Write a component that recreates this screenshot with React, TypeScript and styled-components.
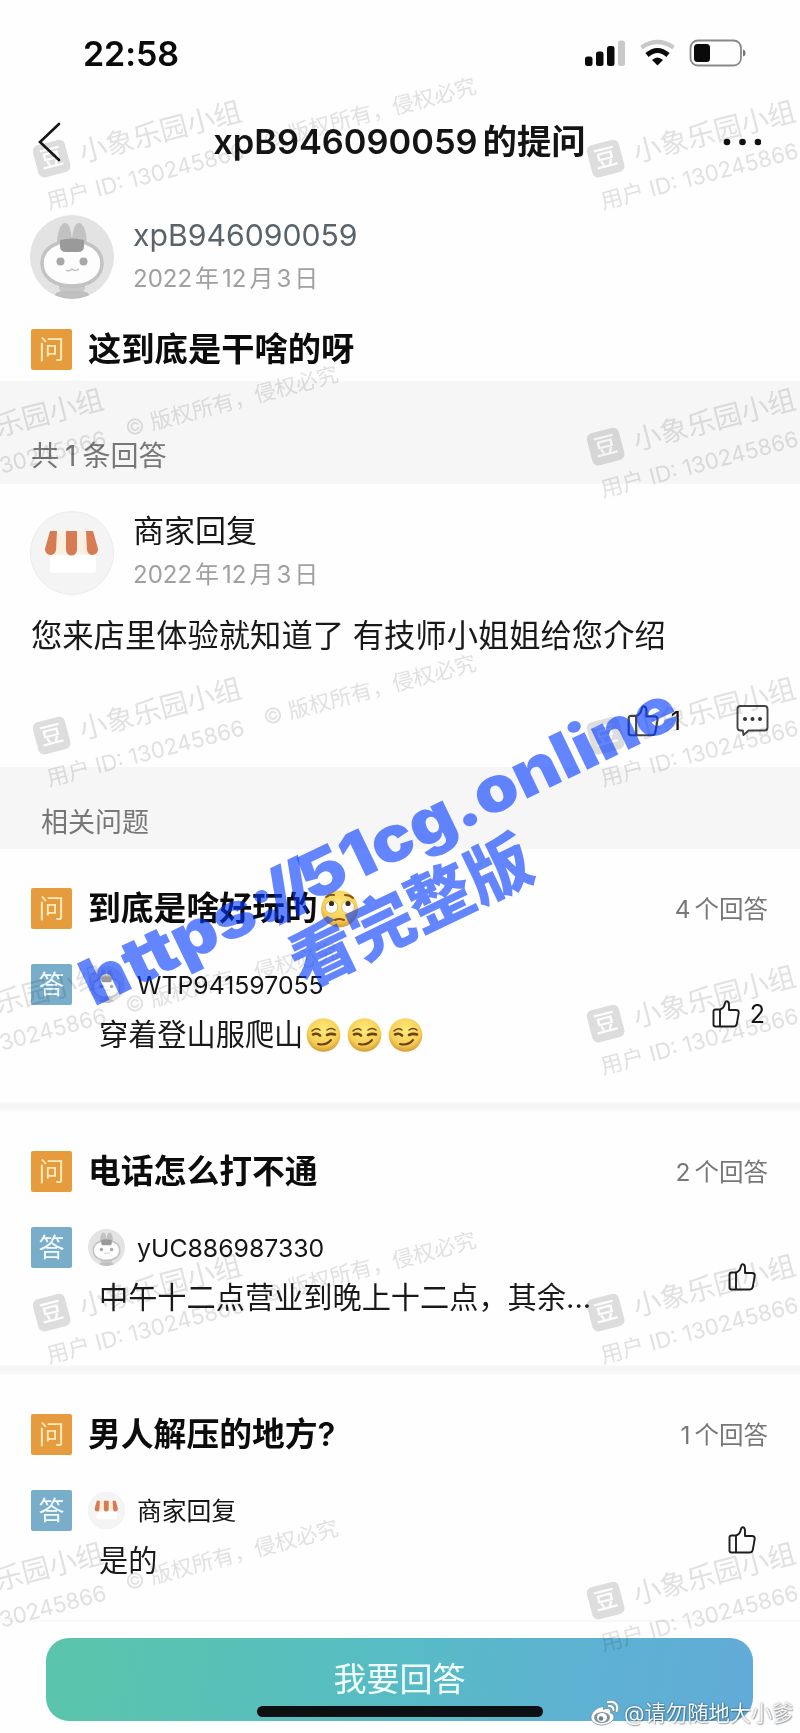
import React from 'react';
import styled, { createGlobalStyle } from 'styled-components';

const latin = `Inter, "Noto Sans CJK SC", sans-serif`;

const GlobalStyle = createGlobalStyle`
  *, *::before, *::after { box-sizing: border-box; }
  body { margin: 0; background: #fefefe; font-family: ${latin}; color: #151515; }
`;

const Page = styled.div`
  position: relative;
  width: 800px;
  height: 1733px;
  overflow: hidden;
  display: flex;
  flex-direction: column;
  background: #fefefe;
`;

const StatusBar = styled.header`
  height: 96px;
  flex: none;
  padding: 12px 54px 0 83px;
  display: flex;
  align-items: center;
  justify-content: space-between;
`;

const Clock = styled.div`
  font-size: 34px;
  line-height: 40px;
  font-weight: 600;
  letter-spacing: -0.1px;
  color: #0a0a0a;
`;

const NavBar = styled.nav`
  height: 92px;
  flex: none;
  padding: 0 39px 0 36px;
  display: flex;
  align-items: center;
  justify-content: space-between;
`;

const NavTitle = styled.h1`
  margin: 0 0 0 14px;
  font-size: 34.4px;
  line-height: 44px;
  font-weight: 600;
  color: #141414;
  white-space: nowrap;
`;

const Num = styled.span<{ $l?: number; $r?: number }>`
  margin-left: ${p => p.$l ?? 0}px;
  margin-right: ${p => p.$r ?? 0}px;
`;

const Author = styled.div`
  display: flex;
  align-items: center;
  gap: 19px;
  height: 84px;
`;

const AuthorText = styled.div`
  display: flex;
  flex-direction: column;
  gap: 6px;
`;

const AuthorName = styled.div<{ $dark?: boolean }>`
  font-size: ${p => (p.$dark ? 31 : 30.2)}px;
  line-height: 38px;
  color: ${p => (p.$dark ? '#161616' : '#59636c')};
`;

const DateText = styled.div`
  font-size: 24px;
  line-height: 38px;
  color: #a0a0a0;
`;

const Asked = styled.section`
  height: 193px;
  flex: none;
  padding: 27px 30px 0;
  display: flex;
  flex-direction: column;
  gap: 30px;
`;

const Line = styled.div`
  display: flex;
  align-items: center;
  height: 41px;
`;

const Badge = styled.span<{ $kind: 'ask' | 'answer' }>`
  width: 41px;
  height: 41px;
  margin-left: 1px;
  flex: none;
  display: grid;
  place-items: center;
  border-radius: 2px;
  font-size: 26px;
  line-height: 41px;
  background: ${p => (p.$kind === 'ask' ? '#e69c3c' : '#79aecb')};
  color: ${p => (p.$kind === 'ask' ? '#fdebbd' : '#f3fbff')};
`;

const Question = styled.h2<{ $size?: number }>`
  margin: 0 0 0 16px;
  display: flex;
  align-items: center;
  font-size: ${p => p.$size ?? 32.8}px;
  line-height: 41px;
  font-weight: 600;
  color: #0c0c0c;
  white-space: nowrap;
`;

const Band = styled.div<{ $h: number; $pad: string; $size: number }>`
  height: ${p => p.$h}px;
  flex: none;
  padding: ${p => p.$pad};
  background: #f6f6f6;
  font-size: ${p => p.$size}px;
  line-height: 36px;
  color: #777;
`;

const Reply = styled.section`
  height: 283px;
  flex: none;
  padding: 27px 30px 0;
  display: flex;
  flex-direction: column;
`;

const ReplyBody = styled.p`
  margin: 20px 0 0 1px;
  font-size: 31.3px;
  line-height: 42px;
  color: #191919;
  white-space: nowrap;
`;

const ReplyActions = styled.div`
  margin-top: 47px;
  padding-right: 1px;
  display: flex;
  align-items: center;
  justify-content: flex-end;
  height: 34px;
`;

const Count = styled.span<{ $l: number; $r?: number }>`
  margin-left: ${p => p.$l}px;
  margin-right: ${p => p.$r ?? 0}px;
  font-size: 25px;
  line-height: 30px;
`;

const Card = styled.article`
  height: 253px;
  flex: none;
  padding: 39px 32px 0 30px;
  display: flex;
  flex-direction: column;
`;

const Divider = styled.div`
  height: 10px;
  flex: none;
  background: linear-gradient(#fafafa, #f4f4f4 40%, #fbfbfb);
`;

const Answers = styled.span`
  margin-left: auto;
  font-size: 24.5px;
  line-height: 40px;
  color: #777;
`;

const AnswerArea = styled.div`
  margin-top: 35px;
  display: flex;
`;

const AnswerMain = styled.div`
  margin-left: 16px;
  flex: 1;
`;

const Who = styled.div<{ $cjk?: boolean }>`
  display: flex;
  align-items: center;
  gap: 12px;
  height: 41px;
  font-size: 24.8px;

  span {
    padding-bottom: ${p => (p.$cjk ? 4 : 0)}px;
  }
`;

const AnswerText = styled.div`
  margin: 8px 0 0 11px;
  display: flex;
  align-items: center;
  font-size: 29.2px;
  line-height: 44px;
  color: #191919;
  white-space: nowrap;
`;

const Likes = styled.div<{ $right: number }>`
  height: 34px;
  margin: 33px ${p => p.$right}px 0 0;
  display: flex;
  align-items: center;
`;

const Footer = styled.footer`
  margin-top: -8px;
  flex: 1;
  padding: 16px 47px 0 46px;
  border-top: 2px solid #f8f8f8;
`;

const AnswerButton = styled.button`
  width: 100%;
  height: 83px;
  border: 0;
  border-radius: 23px;
  padding: 0;
  display: flex;
  flex-direction: column;
  align-items: center;
  background: linear-gradient(100deg, #5bc4ac 5%, #57bcc4 48%, #5eb2d2 75%, #61abd8);
  color: #f2ffff;
  font: 400 33px ${latin};
`;

const ButtonText = styled.span`
  margin-top: 20px;
  line-height: 42px;
`;

const HomeBar = styled.i`
  width: 286px;
  height: 11px;
  margin-top: 6px;
  border-radius: 6px;
  background: #0d1012;
`;

const Overlay = styled.div`
  position: absolute;
  inset: 0;
  overflow: hidden;
  pointer-events: none;
  mix-blend-mode: multiply;
`;

const Stamp = styled.div<{ $x: number; $y: number }>`
  position: absolute;
  left: ${p => p.$x}px;
  top: ${p => p.$y}px;
  display: grid;
  grid-template-columns: 213px max-content;
  column-gap: 13px;
  transform: translate(-17px, -17px) rotate(-14.7deg);
  transform-origin: 17px 17px;
  color: #e2e2e2;
  white-space: nowrap;
`;

const StampHead = styled.div`
  display: flex;
  align-items: center;
  height: 34px;
  gap: 12px;
  font-size: 27.8px;
`;

const StampLogo = styled.span`
  width: 33px;
  height: 33px;
  border-radius: 6px;
  background: #dedede;
  color: #fff;
  display: grid;
  place-items: center;
  font-size: 23px;
  font-weight: 500;
  line-height: 33px;
`;

const StampId = styled.div`
  grid-column: 1;
  margin: 9px 0 0 1px;
  font-size: 22.1px;
  line-height: 30px;
`;

const StampRights = styled.div`
  grid-column: 2;
  margin: 5px 0 0 0;
  font-size: 21.5px;
  line-height: 30px;
`;

const Link = styled.div`
  position: absolute;
  left: 94px;
  top: 944px;
  font-size: 64px;
  line-height: 80px;
  font-weight: 900;
  color: rgba(0, 55, 255, 0.61);
  white-space: nowrap;
  transform: rotate(-25.7deg) scaleX(1.1);
  transform-origin: 0 63px;
`;

const Tight = styled.span`
  letter-spacing: -9px;
`;

const LinkNote = styled.div`
  position: absolute;
  left: 411px;
  top: 912px;
  font-size: 65px;
  line-height: 80px;
  font-weight: 900;
  color: rgba(0, 55, 255, 0.61);
  white-space: nowrap;
  transform: translate(-50%, -50%) rotate(-25.7deg);
`;

const Credit = styled.div`
  position: absolute;
  left: 590px;
  top: 1697px;
  height: 32px;
  display: flex;
  align-items: center;
  gap: 5px;
  font-size: 21.3px;
  line-height: 32px;
  color: #f4f8fa;
  text-shadow: 0 0 2px rgba(0, 0, 0, 0.5), 1px 1px 1px rgba(0, 0, 0, 0.25);
  white-space: nowrap;
`;

const Rabbit = ({ size }: { size: number }) => (
  <svg width={size} height={size} viewBox="0 0 84 84">
    <defs><clipPath id="disc"><circle cx="42" cy="42" r="42" /></clipPath></defs>
    <g clipPath="url(#disc)">
      <rect width="84" height="84" fill="#e3e3e3" />
      <ellipse cx="42" cy="80" rx="17" ry="5" fill="#c0c0c0" />
      <rect x="29" y="68" width="26" height="8" rx="3" fill="#c8c8c8" />
      <path d="M27 30C27 19 30 8 35 8S41 17 42 24C43 17 44 8 49 8s8 11 8 22z" fill="#c2c2c2" />
      <path d="M42 26c18 0 30 9 30 22 0 14-12 23-30 23S12 62 12 48c0-13 12-22 30-22z" fill="#fdfdfd" stroke="#c2c2c2" strokeWidth="3.500" />
      <path d="M30 25q12-3 24 0v6q0 6-6 6H36q-6 0-6-6z" fill="#9a9a9a" />
      <circle cx="30.500" cy="46.500" r="4" fill="#a8a8a8" />
      <circle cx="53.500" cy="46.500" r="4" fill="#a8a8a8" />
      <path d="M36 55q3 2 6-1q3 3 7 0" fill="none" stroke="#c0c0c0" strokeWidth="1.500" />
    </g>
  </svg>
);

const Shop = ({ size }: { size: number }) => (
  <svg width={size} height={size} viewBox="0 0 84 84">
    <circle cx="42" cy="42" r="41.500" fill="#f4f4f4" stroke="#ebebeb" />
    <path d="M20 44h46v15q0 3-3 3H23q-3 0-3-3z" fill="#fff" />
    <path d="M27 20h9v20q-5 6-11 1zM48 20h8l4 21q-6 5-12-1z" fill="#fbf0df" />
    <path d="M20 20h7l-1 19a5.500 5.500 0 0 1-11-1z" fill="#d97b52" />
    <path d="M36 20h11v19a5.500 5.500 0 0 1-11 0z" fill="#d97b52" />
    <path d="M56 20h7l5 18a5.500 5.500 0 0 1-11 1z" fill="#d97b52" />
  </svg>
);

const Thumb = ({ size = 28, color = '#1d1d1d' }: { size?: number; color?: string }) => (
  <svg width={size} height={size} viewBox="0 0 28 28" fill="none" stroke={color} strokeWidth="1.900" strokeLinejoin="round">
    <path d="M8 9.500H3.500Q1.500 9.500 1.500 11.500V24.500Q1.500 26.500 3.500 26.500H21.500Q24 26.500 24.700 24.300L26.700 13Q27 10 24 10H17V4.500Q16.800 1.200 14.500 1.200Q13.400 1.200 13 3Q12 8.500 8 9.500Z" />
    <path d="M8 9.500V26.500" />
  </svg>
);

const Comment = () => (
  <svg width="33" height="34" viewBox="0 0 33 34">
    <path d="M4.500 2H28.500Q31.500 2 31.500 5V23.500Q31.500 26.500 28.500 26.500H12.500L7.500 31L6.800 26.500H4.500Q1.500 26.500 1.500 23.500V5Q1.500 2 4.500 2Z" fill="none" stroke="#444" strokeWidth="1.900" strokeLinejoin="round" />
    <g fill="#333"><circle cx="9" cy="15" r="2" /><circle cx="16.500" cy="15" r="2" /><circle cx="24" cy="15" r="2" /></g>
  </svg>
);

const FaceFill = () => (
  <defs>
    <radialGradient id="face" cx="50%" cy="35%" r="65%">
      <stop offset="0" stopColor="#fdea7c" /><stop offset=".7" stopColor="#f6cf55" /><stop offset="1" stopColor="#d99a34" />
    </radialGradient>
  </defs>
);

const Smirk = () => (
  <svg width="41" height="34" viewBox="0 0 41 34">
    <FaceFill />
    <circle cx="20.500" cy="17" r="16.800" fill="url(#face)" />
    <g fill="none" stroke="#6a4214" strokeWidth="2" strokeLinecap="round">
      <path d="M9 13q4-4 8-1M24 12q4-3 8 0" strokeWidth="1.400" />
      <path d="M10 16.500q4-2 7 1M24 17q4-2 8-.5" strokeWidth="2.600" />
      <path d="M15 26q8 2 13-4" />
    </g>
  </svg>
);

const EyeRoll = () => (
  <svg width="42" height="38" viewBox="1 0 42 38">
    <FaceFill />
    <circle cx="22.500" cy="19" r="18.500" fill="url(#face)" />
    <g fill="#fff" stroke="#c79a4a" strokeWidth=".6"><circle cx="14.500" cy="17" r="6.300" /><circle cx="31" cy="17" r="6.300" /></g>
    <circle cx="14.500" cy="13.500" r="2.600" fill="#3d2a18" /><circle cx="31" cy="13.500" r="2.600" fill="#3d2a18" />
    <path d="M9 7q4-3 8-2M28 5q5 0 8 3M18 30q4-2 9 0" fill="none" stroke="#8a5418" strokeWidth="2" strokeLinecap="round" />
  </svg>
);

const StatusIcons = () => (
  <svg width="162" height="30" viewBox="0 0 162 30">
    <g fill="#0a0a0a">
      <rect x="1" y="17.500" width="7.500" height="9.500" rx="2.500" />
      <rect x="12" y="12.500" width="7.500" height="14.500" rx="2.500" />
      <rect x="23" y="7" width="7.500" height="20" rx="2.500" />
      <rect x="34" y="1.500" width="7" height="25.500" rx="2.500" fill="#c9c9c9" />
      <path d="M73.500 26.500L68 21Q73.500 16 79 21Z" />
      <rect x="110" y="5" width="16" height="18" rx="3.500" />
      <path d="M159 10.500q2.500.5 2.500 3.500t-2.500 3.500z" fill="#777" />
    </g>
    <path d="M63 16Q73.500 7 84 16" fill="none" stroke="#0a0a0a" strokeWidth="5" />
    <path d="M57.500 8.500Q73.500-2.500 89.500 8.500" fill="none" stroke="#c8c8c8" strokeWidth="4.500" />
    <rect x="106.500" y="1.500" width="50.500" height="25" rx="7.500" fill="none" stroke="#888" strokeWidth="1.800" />
  </svg>
);

const WeiboEye = () => (
  <svg width="29" height="26" viewBox="0 0 29 26">
    <path d="M11 7C6 8 1 13 1 17.500C1 22 6 25 12 25s12-4 12-8c0-2.500-2-3.500-3.500-4q1-4-2.500-4.500-2.500 0-4.500 1Q14 6 11 7z" fill="#fff" stroke="#7b8b95" strokeWidth=".8" />
    <ellipse cx="12" cy="17.500" rx="8" ry="5.500" fill="#7f929e" />
    <ellipse cx="12" cy="17.500" rx="5" ry="4.500" fill="#fff" />
    <circle cx="11" cy="18.500" r="2.300" fill="#6a7d89" />
    <path d="M18 2q7-1.500 9 4 .6 2.500-.3 5M19 6q4-.5 4.500 4" fill="none" stroke="#8495a0" strokeWidth="3.200" strokeLinecap="round" />
    <path d="M18 2q7-1.500 9 4 .6 2.500-.3 5M19 6q4-.5 4.500 4" fill="none" stroke="#fff" strokeWidth="2" strokeLinecap="round" />
  </svg>
);

const stamps: [number, number][] = [
  [52, 158], [606, 158], [-86, 446], [606, 446], [52, 735], [606, 735],
  [-86, 1023], [606, 1023], [52, 1312], [606, 1312], [-86, 1600], [606, 1600],
];

type Item = {
  title: string;
  face?: boolean;
  count: string;
  who: string;
  shop?: boolean;
  text: string;
  smirks?: number;
  likes?: string;
};

const items: Item[] = [
  { title: '到底是啥好玩的', face: true, count: '4', who: 'WTP941597055', text: '穿着登山服爬山', smirks: 3, likes: '2' },
  { title: '电话怎么打不通', count: '2', who: 'yUC886987330', text: '中午十二点营业到晚上十二点，其余...' },
  { title: '男人解压的地方?', count: '1', who: '商家回复', shop: true, text: '是的' },
];

const PostDate = () => (
  <DateText>
    <Num $r={3}>2022</Num>年<Num $l={3} $r={3}>12</Num>月<Num $l={3} $r={3}>3</Num>日
  </DateText>
);

export default function App() {
  return (
    <Page>
      <GlobalStyle />
      <StatusBar>
        <Clock>22:58</Clock>
        <StatusIcons />
      </StatusBar>
      <NavBar>
        <svg width="26" height="42" viewBox="0 0 26 42">
          <path d="M23 3L4 21L23 39" fill="none" stroke="#161616" strokeWidth="2.600" strokeLinecap="round" />
        </svg>
        <NavTitle><Num $r={5}>xpB946090059</Num>的提问</NavTitle>
        <svg width="38" height="8" viewBox="0 0 38 8" fill="#111">
          <circle cx="4" cy="4" r="3.300" /><circle cx="19.500" cy="4" r="3.300" /><circle cx="35" cy="4" r="3.300" />
        </svg>
      </NavBar>
      <Asked>
        <Author>
          <Rabbit size={84} />
          <AuthorText>
            <AuthorName>xpB946090059</AuthorName>
            <PostDate />
          </AuthorText>
        </Author>
        <Line>
          <Badge $kind="ask">问</Badge>
          <Question $size={33.3}>这到底是干啥的呀</Question>
        </Line>
      </Asked>
      <Band $h={103} $pad="57px 0 0 31px" $size={28}>共<Num $l={6} $r={6}>1</Num>条回答</Band>
      <Reply>
        <Author>
          <Shop size={84} />
          <AuthorText>
            <AuthorName $dark>商家回复</AuthorName>
            <PostDate />
          </AuthorText>
        </Author>
        <ReplyBody>您来店里体验就知道了 有技师小姐姐给您介绍</ReplyBody>
        <ReplyActions>
          <Thumb size={32} color="#444" />
          <Count $l={12} $r={55}>1</Count>
          <Comment />
        </ReplyActions>
      </Reply>
      <Band $h={82} $pad="38px 0 0 41px" $size={27}>相关问题</Band>
      {items.map((it, i) => (
        <React.Fragment key={it.title}>
          {i > 0 && <Divider />}
          <Card>
            <Line>
              <Badge $kind="ask">问</Badge>
              <Question>{it.title}{it.face && <EyeRoll />}</Question>
              <Answers><Num $r={4}>{it.count}</Num>个回答</Answers>
            </Line>
            <AnswerArea>
              <Badge $kind="answer">答</Badge>
              <AnswerMain>
                <Who $cjk={it.shop}>
                  {it.shop ? <Shop size={37} /> : <Rabbit size={37} />}
                  <span>{it.who}</span>
                </Who>
                <AnswerText>
                  {it.text}
                  {Array.from({ length: it.smirks ?? 0 }, (_, n) => <Smirk key={n} />)}
                </AnswerText>
              </AnswerMain>
              <Likes $right={it.likes ? 3 : 12}>
                <Thumb />
                {it.likes && <Count $l={10}>{it.likes}</Count>}
              </Likes>
            </AnswerArea>
          </Card>
        </React.Fragment>
      ))}
      <Footer>
        <AnswerButton>
          <ButtonText>我要回答</ButtonText>
          <HomeBar />
        </AnswerButton>
      </Footer>
      <Overlay>
        {stamps.map(([x, y]) => (
          <Stamp key={`${x}-${y}`} $x={x} $y={y}>
            <StampHead><StampLogo>豆</StampLogo>小象乐园小组</StampHead>
            <span />
            <StampId>用户 ID: 130245866</StampId>
            {x < 600 && <StampRights>© 版权所有，侵权必究</StampRights>}
          </Stamp>
        ))}
      </Overlay>
      <Link>https<Tight>://</Tight>51cg.online</Link>
      <LinkNote>看完整版</LinkNote>
      <Credit><WeiboEye />@请勿随地大小爹</Credit>
    </Page>
  );
}
